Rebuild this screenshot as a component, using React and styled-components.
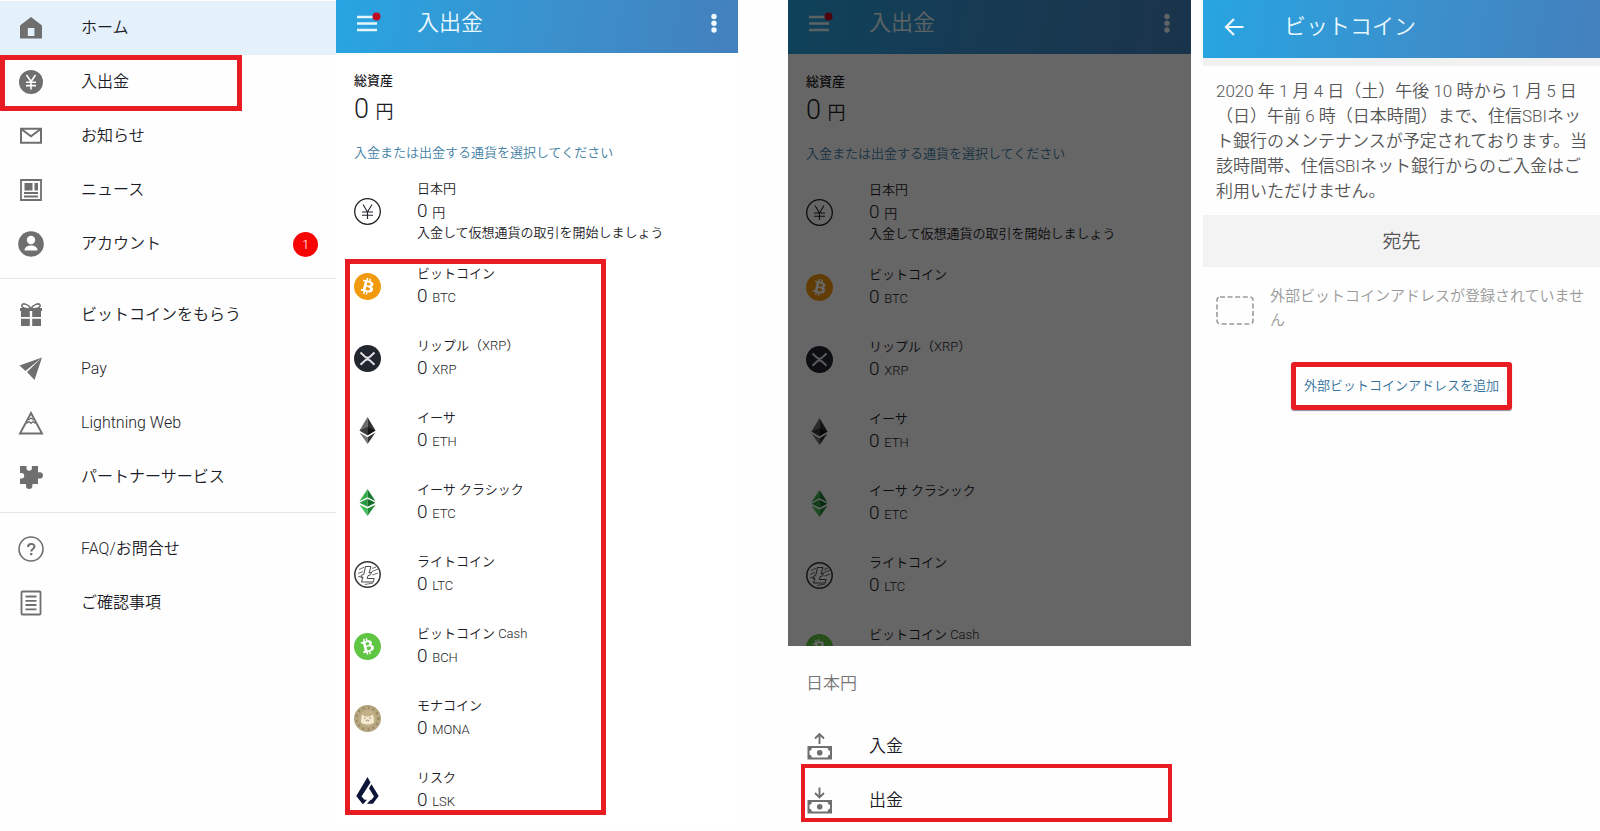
import React from 'react'
import styled, { createGlobalStyle } from 'styled-components'
import { SiBitcoin, SiBitcoincash } from 'react-icons/si'

const navGroups = [
  [
    { label: 'ホーム', icon: HomeIcon, active: true },
    { label: '入出金', icon: YenSolidIcon, marked: true },
    { label: 'お知らせ', icon: MailIcon },
    { label: 'ニュース', icon: NewsIcon },
    { label: 'アカウント', icon: AccountIcon, badge: 1 },
  ],
  [
    { label: 'ビットコインをもらう', icon: GiftIcon },
    { label: 'Pay', icon: PlaneIcon },
    { label: 'Lightning Web', icon: LightningIcon },
    { label: 'パートナーサービス', icon: PuzzleIcon },
  ],
  [
    { label: 'FAQ/お問合せ', icon: HelpIcon },
    { label: 'ご確認事項', icon: DocumentIcon },
  ],
]

const coins = [
  { name: 'ビットコイン', unit: 'BTC', icon: BtcIcon },
  { name: 'リップル（XRP）', unit: 'XRP', icon: XrpIcon },
  { name: 'イーサ', unit: 'ETH', icon: EthIcon },
  { name: 'イーサ クラシック', unit: 'ETC', icon: EtcIcon },
  { name: 'ライトコイン', unit: 'LTC', icon: LtcIcon },
  { name: 'ビットコイン Cash', unit: 'BCH', icon: BchIcon },
  { name: 'モナコイン', unit: 'MONA', icon: MonaIcon },
  { name: 'リスク', unit: 'LSK', icon: LskIcon },
]

function App() {
  return (
    <>
      <GlobalStyle />
      <Page>
        <Sidebar />
        <Screen $grow={402}>
          <Wallet items={coins} marked />
        </Screen>
        <Screen $grow={403} $gap="50px">
          <Dimmed>
            <Wallet items={coins.slice(0, 6)} tall />
          </Dimmed>
          <ActionSheet />
        </Screen>
        <Screen $grow={397} $gap="12px">
          <AddressScreen />
        </Screen>
      </Page>
    </>
  )
}

function Sidebar() {
  return (
    <Nav>
      {navGroups.map((group, i) => (
        <NavGroup key={i}>
          {group.map(({ label, icon: Icon, active, marked, badge }) => (
            <li key={label}>
              <NavLink href="#" $active={active}>
                <NavIcon><Icon /></NavIcon>
                {label}
                {badge && <Badge>{badge}</Badge>}
                {marked && <NavMark />}
              </NavLink>
            </li>
          ))}
        </NavGroup>
      ))}
    </Nav>
  )
}

function Wallet({ items, marked, tall }) {
  return (
    <>
      <AppBar $height={tall ? '54px' : '53px'}>
        <MenuButton aria-label="メニュー">
          <svg width="27" height="24" viewBox="0 0 27 24">
            <path d="M3 6h20M3 12.500h20M3 19h20" stroke="#e4f6fb" strokeWidth="2.400" />
            <circle cx="22.500" cy="5.500" r="4" fill="#c00d26" />
          </svg>
        </MenuButton>
        <BarTitle>入出金</BarTitle>
        <MoreButton aria-label="その他">
          <svg width="8" height="24" viewBox="0 0 8 24" fill="#eef9fc">
            <circle cx="4" cy="5.500" r="2.700" />
            <circle cx="4" cy="12.300" r="2.700" />
            <circle cx="4" cy="19" r="2.700" />
          </svg>
        </MoreButton>
      </AppBar>
      <WalletBody>
        <TotalLabel>総資産</TotalLabel>
        <Total>0 <small>円</small></Total>
        <Hint>入金または出金する通貨を選択してください</Hint>
        <YenRow>
          <YenIcon />
          <span>
            <CoinName>日本円</CoinName>
            <Amount>0 <small>円</small></Amount>
            <CoinName>入金して仮想通貨の取引を開始しましょう</CoinName>
          </span>
        </YenRow>
        <CoinList>
          {items.map(({ name, unit, icon: Icon }) => (
            <li key={unit}>
              <CoinRow>
                <Icon />
                <span>
                  <CoinName>{name}</CoinName>
                  <Amount>0 <small>{unit}</small></Amount>
                </span>
              </CoinRow>
            </li>
          ))}
          {marked && <CoinMark />}
        </CoinList>
      </WalletBody>
    </>
  )
}

function ActionSheet() {
  return (
    <Sheet>
      <SheetTitle>日本円</SheetTitle>
      <SheetButton>
        <CashIcon up />
        入金
      </SheetButton>
      <SheetButton>
        <CashIcon />
        出金
        <SheetMark />
      </SheetButton>
    </Sheet>
  )
}

function AddressScreen() {
  return (
    <>
      <AppBar $height="58px" $padBottom="4px">
        <MenuButton aria-label="戻る">
          <svg width="27" height="24" viewBox="0 0 27 24" fill="none" stroke="#f0fafd" strokeWidth="2.200">
            <path d="M22.500 12H5.500M13 4l-8 8 8 8" />
          </svg>
        </MenuButton>
        <BarTitle>ビットコイン</BarTitle>
      </AppBar>
      <BarShade />
      <Notice>
        2020 年 1 月 4 日（土）午後 10 時から 1 月 5 日<br />
        （日）午前 6 時（日本時間）まで、住信SBIネッ<br />
        ト銀行のメンテナンスが予定されております。当<br />
        該時間帯、住信SBIネット銀行からのご入金はご<br />
        利用いただけません。
      </Notice>
      <SectionTitle>宛先</SectionTitle>
      <EmptyRow>
        <svg width="38" height="29" viewBox="0 0 38 29" fill="none" stroke="#9a9a9a" strokeWidth="1.600">
          <rect x="1" y="1" width="36" height="27" rx="3" strokeDasharray="5 2.600" />
        </svg>
        <p>外部ビットコインアドレスが登録されていません</p>
      </EmptyRow>
      <AddButton>外部ビットコインアドレスを追加</AddButton>
    </>
  )
}

/* navigation icons */

function HomeIcon() {
  return (
    <svg width="26" height="26" viewBox="0 0 26 26" fill="#6f6f6f">
      <path fillRule="evenodd" d="M13 2 24 10.500V23.500H2V10.500ZM9.800 13v8h6.600v-8Z" />
    </svg>
  )
}

function YenSolidIcon() {
  return (
    <svg width="26" height="26" viewBox="0 0 26 26">
      <circle cx="13" cy="13" r="12" fill="#6f6f6f" />
      <path d="M8.500 6 13 12.500 17.500 6M13 12v8.500M8 13.200h10M8 16.600h10" fill="none" stroke="#fff" strokeWidth="1.600" />
    </svg>
  )
}

function MailIcon() {
  return (
    <svg width="26" height="26" viewBox="0 0 26 26" fill="none" stroke="#6f6f6f" strokeWidth="2">
      <path d="M3 5.800h20v14H3ZM3.500 6.300 13 13.300l9.500-7" />
    </svg>
  )
}

function NewsIcon() {
  return (
    <svg width="26" height="26" viewBox="0 0 26 26" fill="none" stroke="#6f6f6f" strokeWidth="2">
      <path d="M3 3h20v20H3ZM6 16h14M6 19.500h14" strokeWidth="1.800" />
      <path d="M6.500 6h8v7.500h-8ZM16.500 6H20v7.500h-3.500Z" fill="#6f6f6f" stroke="none" />
    </svg>
  )
}

function AccountIcon() {
  return (
    <svg width="26" height="26" viewBox="0 0 26 26">
      <circle cx="13" cy="13" r="12.800" fill="#6f6f6f" />
      <circle cx="13" cy="9" r="4.200" fill="#fff" />
      <path d="M6.500 19.500c0-3.500 3-5 6.500-5s6.500 1.500 6.500 5Z" fill="#fff" />
    </svg>
  )
}

function GiftIcon() {
  return (
    <svg width="26" height="26" viewBox="0 0 26 26" fill="#6f6f6f">
      <path d="M2 6h22v3h-1v6h-8.800V9h-2.400v6H3V9H2ZM3 16.700h8.800V24H3ZM14.200 16.700H23V24h-8.800Z" />
      <path d="M13 7C11 2.500 5 .500 4 3s3 4 9 4Zm0 0c2-4.500 8-6.500 9-4s-3 4-9 4Z" fill="#fff" stroke="#6f6f6f" strokeWidth="1.600" />
    </svg>
  )
}

function PlaneIcon() {
  return (
    <svg width="26" height="26" viewBox="0 0 26 26" fill="#6f6f6f">
      <path d="M24 1.500 1.500 9.500l6 5.500ZM24 1.500 9 16l7.500 8Z" />
    </svg>
  )
}

function LightningIcon() {
  return (
    <svg width="26" height="26" viewBox="0 0 26 26" fill="none" stroke="#6f6f6f" strokeWidth="1.900">
      <path d="M13 3 24 23.500H2Z" />
      <path d="M8.500 13.500 11 11.500l2 1.800 2-1.800 2.500 2M10.500 10 13 8l2.500 2" strokeWidth="1.300" />
    </svg>
  )
}

function PuzzleIcon() {
  return (
    <svg width="26" height="26" viewBox="0 0 26 26" fill="#6f6f6f">
      <path d="M2 2h6.500v2a2.700 2.700 0 0 0 5.400 0V2H20v6.300h1.800a3 3 0 0 1 0 6.200H20V20h-5.600v1.800a3.200 3.200 0 0 1-6.400 0V20H2v-5.500h1.500a2.700 2.700 0 0 0 0-5.400H2Z" />
    </svg>
  )
}

function HelpIcon() {
  return (
    <svg width="26" height="26" viewBox="0 0 26 26" fill="none" stroke="#6f6f6f">
      <circle cx="13" cy="13" r="12" strokeWidth="1.600" />
      <path d="M10 11c0-4 6.500-4 6.500-.500 0 2.500-3.300 2.600-3.300 5" strokeWidth="2" />
      <path d="M13.200 17v2.200" strokeWidth="2.200" />
    </svg>
  )
}

function DocumentIcon() {
  return (
    <svg width="26" height="26" viewBox="0 0 26 26" fill="none" stroke="#6f6f6f" strokeWidth="1.800">
      <rect x="3.500" y="1.500" width="19" height="23" rx="1" />
      <path d="M7.500 6.500h11M7.500 10.800h11M7.500 15h11M7.500 19.300h11" />
    </svg>
  )
}

/* currency icons */

function YenIcon() {
  return (
    <svg width="27" height="27" viewBox="0 0 27 27" fill="none" stroke="#23232c">
      <circle cx="13.500" cy="13.500" r="12.800" strokeWidth="1.300" />
      <path d="M9 6.500 13.500 14 18 6.500M13.500 13.500V21M8 14h11M8 17.300h11" strokeWidth="1.100" />
    </svg>
  )
}

function BtcIcon() {
  return (
    <CoinDisc>
      <SiBitcoin size={27} color="#f29a0d" />
    </CoinDisc>
  )
}

function BchIcon() {
  return (
    <CoinDisc>
      <SiBitcoincash size={27} color="#5fc542" />
    </CoinDisc>
  )
}

function XrpIcon() {
  return (
    <svg width="27" height="27" viewBox="0 0 27 27" fill="none" stroke="#e4e4e6" strokeWidth="1.900">
      <circle cx="13.500" cy="13.500" r="13.500" fill="#22262f" stroke="none" />
      <path d="M6.500 7.500 11 11.800q2.500 2 5 0l4.500-4.300M6.500 19.800 11 15.500q2.500-2 5 0l4.500 4.300" />
    </svg>
  )
}

function EthIcon() {
  return (
    <svg width="27" height="27" viewBox="0 0 27 27">
      <path d="M13.500 0 5.500 13.600l8 4.600Z" fill="#6b6b6b" />
      <path d="m13.500 0 8 13.600-8 4.600Z" fill="#333" />
      <path d="m5.500 13.600 8-3.500v8.100Z" fill="#3c3c3c" />
      <path d="m13.500 10.100 8 3.500-8 4.600Z" fill="#151515" />
      <path d="m5.500 15.500 8 4.700V27Z" fill="#777" />
      <path d="m21.500 15.500-8 4.700V27Z" fill="#333" />
    </svg>
  )
}

function EtcIcon() {
  return (
    <svg width="27" height="27" viewBox="0 0 27 27">
      <path d="m13.500 0-8 12.300 8-4Z" fill="#35b04b" />
      <path d="m13.500 0 8 12.300-8-4Z" fill="#1a7a31" />
      <path d="m5.500 13.700 8-4v8.100Z" fill="#279a3e" />
      <path d="m21.500 13.700-8-4v8.100Z" fill="#156a29" />
      <path d="m5.500 15.700 8 3.900V27Z" fill="#41bd58" />
      <path d="m21.500 15.700-8 3.900V27Z" fill="#1f8a38" />
    </svg>
  )
}

function LtcIcon() {
  return (
    <svg width="27" height="27" viewBox="0 0 27 27" fill="none" stroke="#4a4a4a">
      <circle cx="13.500" cy="13.500" r="12.700" strokeWidth="1.500" stroke="#333" />
      <path d="M11.500 5.500h5.500l-2 6.500 2.500-1-.800 2.700-2.700 1-.800 2.800h7l-1 3.500H7.500l1.500-5-2 .800.800-2.700 2-.800Z" strokeWidth="1" />
      <path d="M5 8.500 10.500 6M4 12.500l5-2M18 7.500l4-1.500M18 10.500l6-2.500M18.500 14l5.500-2M4 16l3-1M11 23.500l8-1.500" strokeWidth=".800" />
    </svg>
  )
}

function MonaIcon() {
  return (
    <svg width="27" height="27" viewBox="0 0 27 27">
      <circle cx="13.500" cy="13.500" r="13.500" fill="#b5a57e" />
      <circle cx="13.500" cy="13.500" r="11" fill="none" stroke="#8d7c56" strokeWidth="2" strokeDasharray="1.200 4" />
      <circle cx="13.500" cy="13.500" r="8.500" fill="#c2b187" />
      <path d="M7 17c0-3 .5-6.500 1.500-7.500l2.500 2h5l2.500-2c1 1 1.500 4.500 1.500 7.500-1 3.200-12 3.200-13 0Z" fill="#f3ead0" />
      <path d="M10 13.200h1.500M15.500 13.200H17M12 16l1.500-.8 1.500.8" fill="none" stroke="#8d7c56" strokeWidth=".9" />
    </svg>
  )
}

function LskIcon() {
  return (
    <svg width="27" height="27" viewBox="0 0 27 27" fill="#0d1538">
      <path d="M13.500 0 16.500 5.500 7.500 19.500 10.500 22.700h2.500L9.500 26.700H8.300L2.300 19Z" />
      <path d="m17.500 7.300 7.200 11.700-5.800 7.700h-6l3.800-4h.800l2.500-3.200-5-8.200Z" />
    </svg>
  )
}

function CashIcon({ up }) {
  return (
    <svg width="27" height="28" viewBox="0 0 27 28" fill="none" stroke="#6f6f6f">
      <path d={up ? 'M13.500 12V2.500M9 6.500l4.500-4.500L18 6.500' : 'M13.500 1.500V11M9 7l4.500 4.500L18 7'} strokeWidth="1.900" />
      <path fill="#6f6f6f" stroke="none" fillRule="evenodd" d="M1.500 14H26v13.500H1.500ZM6 16q-.5 2.500-2.500 3v3.500q2 .500 2.500 3h15.500q.500-2.500 2.500-3V19q-2-.500-2.500-3Z" />
      <circle cx="13.700" cy="20.700" r="2.800" fill="#6f6f6f" stroke="none" />
    </svg>
  )
}

const GlobalStyle = createGlobalStyle`
  * {
    box-sizing: border-box;
  }
  body {
    margin: 0;
    background: #fefefe;
    color: #1c1c26;
    font-family: Roboto, "Noto Sans CJK JP", sans-serif;
    font-weight: 350;
  }
  ul, p, h1, h2 {
    margin: 0;
    padding: 0;
    list-style: none;
    font-weight: inherit;
  }
  button {
    border: 0;
    padding: 0;
    background: none;
    color: inherit;
    font: inherit;
    text-align: left;
    cursor: pointer;
  }
  small {
    line-height: 1;
  }
  svg {
    display: block;
    flex: none;
  }
`

const Page = styled.main`
  display: flex;
  height: 100vh;
`

const Screen = styled.section`
  display: flex;
  flex-direction: column;
  flex: ${p => p.$grow} 1 0;
  min-width: 0;
  margin-left: ${p => p.$gap || 0};
  overflow: hidden;
`

const Nav = styled.nav`
  flex: 336 1 0;
  min-width: 0;
  padding-top: 1px;
`

const NavGroup = styled.ul`
  padding-bottom: 8px;

  &:first-child {
    padding-bottom: 7px;
  }

  & + & {
    padding-top: 9px;
    border-top: 1px solid #e6e6e8;
  }
`

const NavLink = styled.a`
  position: relative;
  display: flex;
  align-items: center;
  height: 54px;
  padding: 0 18px;
  background: ${p => (p.$active ? '#e4f1fb' : 'transparent')};
  color: inherit;
  font-size: 16px;
  line-height: 24px;
  text-decoration: none;
`

const NavIcon = styled.span`
  width: 63px;
`

const Badge = styled.span`
  width: 25px;
  height: 25px;
  margin-left: auto;
  border-radius: 50%;
  background: #f70505;
  color: #fff;
  font-size: 13px;
  line-height: 25px;
  text-align: center;
`

const Mark = styled.span`
  position: absolute;
  border: 5px solid #e91c24;
  pointer-events: none;
`

const NavMark = styled(Mark)`
  inset: 0 auto -2px 0;
  width: 72%;
`

const CoinMark = styled(Mark)`
  inset: 9px auto 11px 9px;
  width: 65%;
`

const SheetMark = styled(Mark)`
  inset: -9px 19px 5px 13px;
  border-width: 4px;
`

const AppBar = styled.header`
  display: flex;
  flex: none;
  align-items: center;
  height: ${p => p.$height};
  padding: 0 18px;
  padding-bottom: ${p => p.$padBottom || '8px'};
  background: linear-gradient(100deg, #27a5e2, #3b90cc 55%, #4380bd);
`

const MenuButton = styled.button`
  margin-right: 36px;
`

const BarTitle = styled.h1`
  color: #e9f8fc;
  font-size: 22px;
  line-height: 32px;
`

const MoreButton = styled.button`
  width: 10px;
  margin-left: auto;
`

const WalletBody = styled.div`
  padding-top: 18px;
  background: #fff;
`

const TotalLabel = styled.h2`
  padding: 0 18px;
  font-size: 13px;
  font-weight: 500;
  line-height: 20px;
`

const Total = styled.p`
  padding: 0 18px;
  font-size: 27px;
  line-height: 36px;

  small {
    font-size: 18px;
  }
`

const Hint = styled.p`
  padding: 0 18px;
  margin: 16px 0 12px;
  color: #4280a5;
  font-size: 13px;
  line-height: 20px;
`

const CoinRow = styled.button`
  display: flex;
  align-items: center;
  gap: 36px;
  width: 100%;
  height: 72px;
  padding: 0 18px;
`

const YenRow = styled(CoinRow)`
  margin-bottom: 3px;
`

const CoinList = styled.ul`
  position: relative;
`

const CoinName = styled.span`
  display: block;
  font-size: 13px;
  line-height: 20px;
`

const Amount = styled.span`
  display: block;
  font-size: 19px;
  line-height: 24px;

  small {
    font-size: 13px;
  }
`

const CoinDisc = styled.span`
  flex: none;
  width: 27px;
  height: 27px;
  border-radius: 50%;
  background: #fff;
`

const Dimmed = styled.div`
  position: relative;
  flex: 1;
  min-height: 0;
  overflow: hidden;

  &::after {
    content: '';
    position: absolute;
    inset: 0;
    background: rgba(0, 0, 0, 0.6);
  }
`

const Sheet = styled.div`
  flex: none;
  padding: 25px 0 4px;
`

const SheetTitle = styled.h2`
  padding: 0 18px;
  margin-bottom: 24px;
  color: #777;
  font-size: 17px;
  line-height: 24px;
`

const SheetButton = styled.button`
  position: relative;
  display: flex;
  align-items: center;
  gap: 36px;
  width: 100%;
  height: 54px;
  padding: 0 18px;
  font-size: 17px;
  line-height: 24px;
`

const BarShade = styled.div`
  flex: none;
  height: 8px;
  background: #f1f1f2;
`

const Notice = styled.p`
  padding: 13px 0 11px 13px;
  color: #555;
  font-size: 17px;
  line-height: 25px;
  white-space: nowrap;
`

const SectionTitle = styled.h2`
  flex: none;
  padding-top: 2px;
  background: #f3f3f3;
  color: #555;
  font-size: 19px;
  line-height: 50px;
  text-align: center;
`

const EmptyRow = styled.div`
  display: flex;
  gap: 16px;
  padding: 17px 8px 0 13px;
  color: #999;
  font-size: 15px;
  line-height: 24px;

  svg {
    margin-top: 12px;
  }
`

const AddButton = styled.button`
  align-self: center;
  margin-top: 30px;
  padding: 9px 8px;
  border: 5px solid #e91c24;
  border-radius: 3px;
  box-shadow: 0 1px 1px #8b8ba8;
  color: #33719c;
  font-size: 13px;
  line-height: 20px;
`

export default App
